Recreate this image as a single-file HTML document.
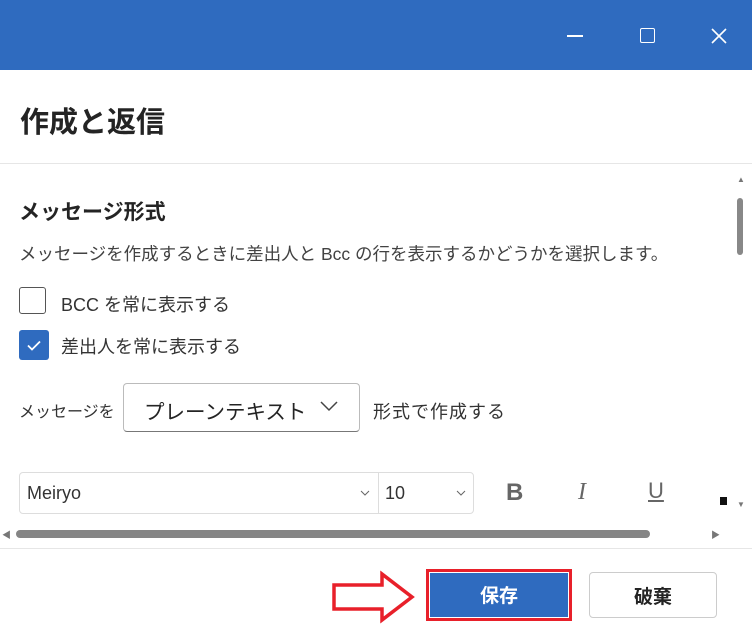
<!DOCTYPE html><html><head><meta charset="utf-8"><style>
body{margin:0;width:752px;height:640px;overflow:hidden;background:#fff;font-family:"Liberation Sans","Noto Sans CJK JP",sans-serif;color:#242424;position:relative}
.a{position:absolute}
</style></head><body>
<div class="a" style="left:0;top:0;width:752px;height:70px;background:#2f6bbf"></div>
<div class="a" style="left:567px;top:35px;width:16px;height:1.5px;background:#fff"></div>
<div class="a" style="left:640px;top:28px;width:13px;height:13px;border:1.5px solid #fff;border-radius:2px"></div>
<svg class="a" style="left:711px;top:28px" width="16" height="16"><path d="M1 1L15 15M15 1L1 15" stroke="#fff" stroke-width="1.6"/></svg>
<div class="a" style="left:20px;top:99px;font-size:29px;font-weight:bold;color:#242424">作成と返信</div>
<div class="a" style="left:0;top:163px;width:752px;height:1px;background:#e6e6e6"></div>
<div class="a" style="left:19px;top:196px;font-size:21px;font-weight:bold">メッセージ形式</div>
<div class="a" style="left:19px;top:241px;font-size:17.5px;color:#424242;white-space:nowrap">メッセージを作成するときに差出人と Bcc の行を表示するかどうかを選択します。</div>
<div class="a" style="left:19px;top:287px;width:27px;height:27px;border:1.5px solid #555;border-radius:3px;box-sizing:border-box"></div>
<div class="a" style="left:61px;top:291px;font-size:18px;color:#333">BCC を常に表示する</div>
<div class="a" style="left:19px;top:330px;width:30px;height:30px;background:#2f6bbf;border-radius:3px"></div>
<svg class="a" style="left:19px;top:330px" width="30" height="30"><path d="M9 15.5l4 4 8-8" stroke="#fff" stroke-width="1.8" fill="none"/></svg>
<div class="a" style="left:61px;top:333px;font-size:18px;color:#333">差出人を常に表示する</div>
<div class="a" style="left:19px;top:398px;font-size:16px;color:#333">メッセージを</div>
<div class="a" style="left:123px;top:383px;width:237px;height:49px;border:1px solid #bbb;border-bottom-color:#777;border-radius:4px;box-sizing:border-box"></div>
<div class="a" style="left:144px;top:395px;font-size:20.5px;color:#242424">プレーンテキスト</div>
<svg class="a" style="left:320px;top:400px" width="18" height="12"><path d="M1 2l8 8 8-8" stroke="#444" stroke-width="1.5" fill="none"/></svg>
<div class="a" style="left:373px;top:398px;font-size:18px;color:#333;letter-spacing:1px">形式で作成する</div>
<div class="a" style="left:19px;top:472px;width:455px;height:42px;border:1px solid #ddd;border-radius:4px;box-sizing:border-box"></div>
<div class="a" style="left:378px;top:473px;width:1px;height:40px;background:#ddd"></div>
<div class="a" style="left:27px;top:483px;font-size:18px;color:#333">Meiryo</div>
<svg class="a" style="left:360px;top:490px" width="10" height="7"><path d="M1 1l4 4 4-4" stroke="#666" fill="none"/></svg>
<div class="a" style="left:385px;top:483px;font-size:18px;color:#333">10</div>
<svg class="a" style="left:456px;top:490px" width="10" height="7"><path d="M1 1l4 4 4-4" stroke="#666" fill="none"/></svg>
<div class="a" style="left:506px;top:479px;font-size:24px;font-weight:bold;color:#666">B</div>
<div class="a" style="left:578px;top:479px;font-size:24px;font-style:italic;color:#666;font-family:'Liberation Serif',serif">I</div>
<div class="a" style="left:648px;top:478px;font-size:22px;text-decoration:underline;color:#666">U</div>
<div class="a" style="left:720px;top:497px;width:7px;height:8px;background:#111"></div>
<div class="a" style="left:737px;top:198px;width:6px;height:57px;background:#888;border-radius:3px"></div>
<div class="a" style="left:737px;top:175px;font-size:8px;color:#777">▲</div>
<div class="a" style="left:737px;top:500px;font-size:8px;color:#777">▼</div>
<div class="a" style="left:16px;top:530px;width:634px;height:8px;background:#858585;border-radius:4px"></div>
<div class="a" style="left:2px;top:528px;font-size:9px;color:#777">◀</div>
<div class="a" style="left:711px;top:528px;font-size:9px;color:#777">▶</div>
<div class="a" style="left:0;top:548px;width:752px;height:1px;background:#e6e6e6"></div>
<svg class="a" style="left:330px;top:570px" width="90" height="56"><path d="M4 15H52V4L82 27L52 50V39H4Z" fill="#fff" stroke="#e8202a" stroke-width="3.5"/></svg>
<div class="a" style="left:426px;top:569px;width:146px;height:52px;border:3px solid #e8202a;box-sizing:border-box"></div>
<div class="a" style="left:430px;top:573px;width:138px;height:44px;background:#2f6bbf;color:#fff;font-weight:bold;font-size:19px;text-align:center;line-height:48px">保存</div>
<div class="a" style="left:589px;top:572px;width:128px;height:46px;border:1px solid #ccc;border-radius:4px;box-sizing:border-box;font-weight:bold;font-size:19px;text-align:center;line-height:50px">破棄</div>
</body></html>
